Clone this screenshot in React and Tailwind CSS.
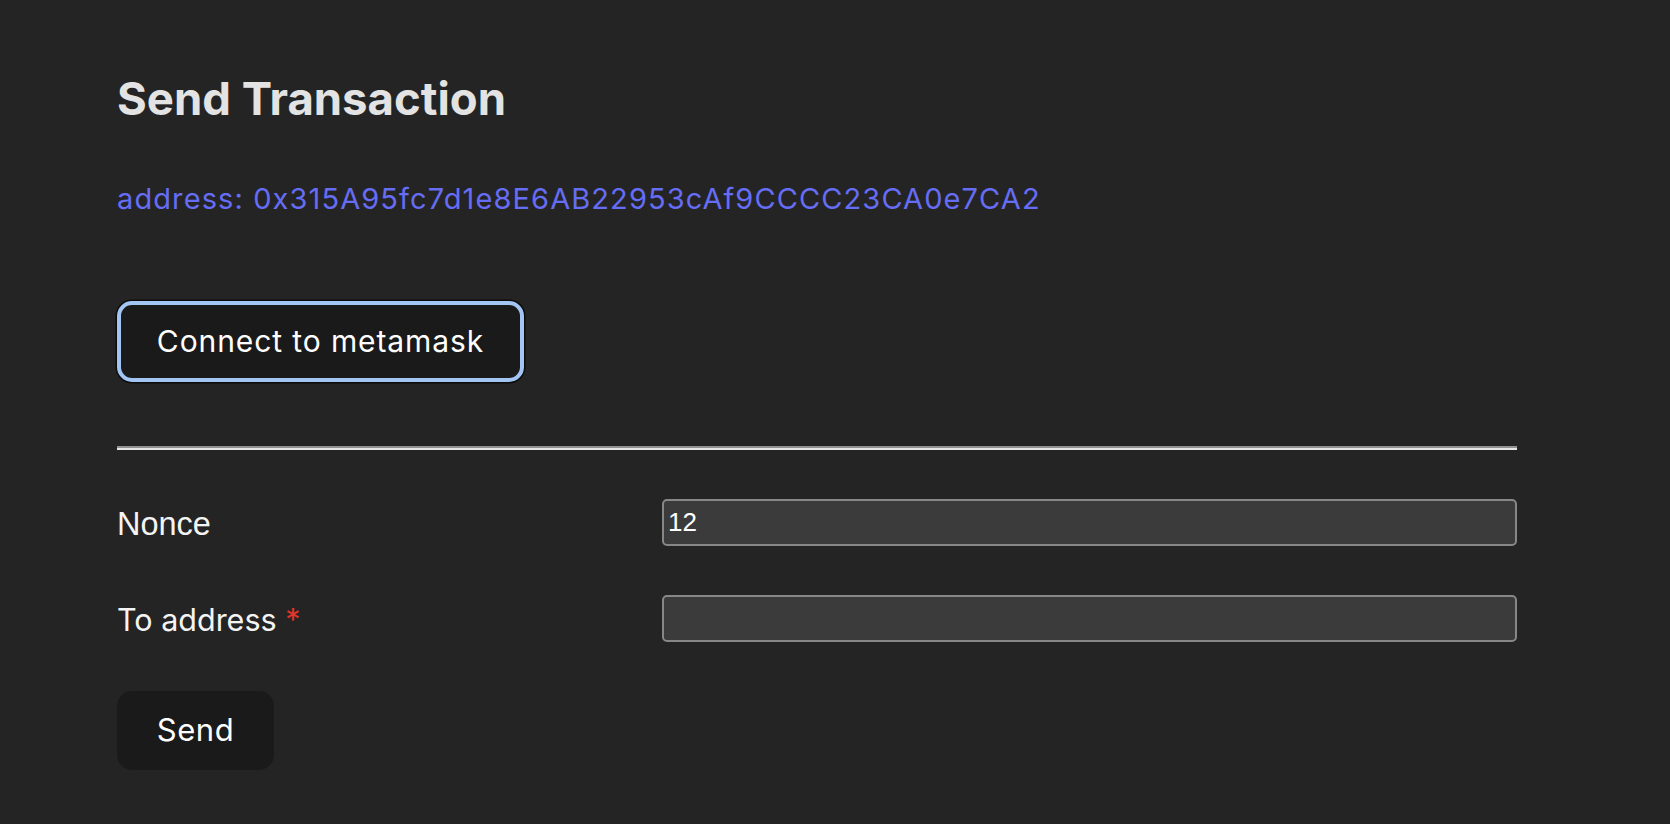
import React from "react";

export default function App() {
  return (
    <div className="min-h-screen w-full bg-[#242424] pl-[117px] pt-[71px] font-['Inter',sans-serif]">
      <div className="w-[1400px] flex flex-col">
        <h2 className="text-[45.5px] leading-[56px] font-bold text-[#e3e3e3] font-['Inter',sans-serif]">
          Send Transaction
        </h2>
        <p className="mt-[54px] text-[29px] leading-[36px] tracking-[1.1px] text-[#666df5] font-['Inter',sans-serif]">
          address: 0x315A95fc7d1e8E6AB22953cAf9CCCC23CA0e7CA2
        </p>
        <div className="mt-[84px]">
          <button className="w-[407px] h-[81px] rounded-[15px] border-[4px] border-[#a2c5f3] bg-[#1a1a1a] shadow-[0_0_0_1.5px_#0d0d0d] text-[30px] tracking-[0.9px] font-normal text-white font-['Inter',sans-serif] flex items-center justify-center">
            Connect to metamask
          </button>
        </div>
        <div className="mt-[64px] h-[4px] border-t-2 border-b-2 border-t-[#929292] border-b-[#e6e6e6]" />
        <div className="mt-[49px] flex h-[47px]">
          <label className="w-[545px] pt-[2px] leading-[47px] text-[32.5px] text-[#f4f4f4] font-['Liberation_Sans',Arial,sans-serif]">
            Nonce
          </label>
          <div className="w-[855px] h-[47px] rounded-[5px] border-2 border-[#878787] bg-[#3b3b3b] pl-[4px] flex items-center text-[26px] text-white font-['Liberation_Sans',Arial,sans-serif]">
            12
          </div>
        </div>
        <div className="mt-[49px] flex h-[47px]">
          <label className="w-[545px] pt-[1px] leading-[47px] text-[30.5px] text-[#f4f4f4] font-['Inter',sans-serif]">
            To address <span className="text-[#e3352b]">*</span>
          </label>
          <div className="w-[855px] h-[47px] rounded-[5px] border-2 border-[#878787] bg-[#3b3b3b]" />
        </div>
        <div className="mt-[49px]">
          <button className="w-[157px] h-[79px] rounded-[15px] bg-[#1a1a1a] text-[31px] tracking-[0.5px] font-normal text-white font-['Inter',sans-serif] flex items-center justify-center">
            Send
          </button>
        </div>
      </div>
    </div>
  );
}
